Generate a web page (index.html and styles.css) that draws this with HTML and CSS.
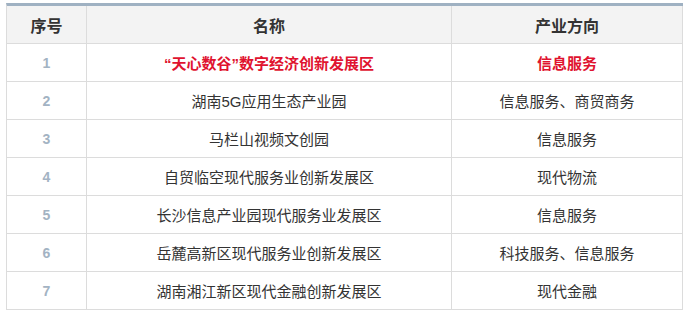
FILE: index.html
```html
<!DOCTYPE html>
<html lang="zh">
<head>
<meta charset="utf-8">
<link rel="stylesheet" href="styles.css">
</head>
<body>
<table class="zone-table">
  <colgroup>
    <col class="c-no">
    <col class="c-name">
    <col class="c-dir">
  </colgroup>
  <thead>
    <tr><th>序号</th><th>名称</th><th>产业方向</th></tr>
  </thead>
  <tbody>
    <tr class="hl"><td class="no">1</td><td>“天心数谷”数字经济创新发展区</td><td>信息服务</td></tr>
    <tr><td class="no">2</td><td>湖南5G应用生态产业园</td><td>信息服务、商贸商务</td></tr>
    <tr><td class="no">3</td><td>马栏山视频文创园</td><td>信息服务</td></tr>
    <tr><td class="no">4</td><td>自贸临空现代服务业创新发展区</td><td>现代物流</td></tr>
    <tr><td class="no">5</td><td>长沙信息产业园现代服务业发展区</td><td>信息服务</td></tr>
    <tr><td class="no">6</td><td>岳麓高新区现代服务业创新发展区</td><td>科技服务、信息服务</td></tr>
    <tr><td class="no">7</td><td>湖南湘江新区现代金融创新发展区</td><td>现代金融</td></tr>
  </tbody>
</table>
</body>
</html>
```
FILE: styles.css
```css
html, body {
  margin: 0;
  padding: 0;
  background: #fff;
}
body {
  padding: 3px 0 0 6px;
  font-family: "Liberation Sans", "Noto Sans CJK SC", sans-serif;
  color: #333;
}
.zone-table {
  width: 677px;
  border-collapse: separate;
  border-spacing: 0;
  table-layout: fixed;
  border-top: 3px solid #9fb1c2;
  border-left: 1px solid #dcdcdc;
}
.c-no { width: 80px; }
.c-name { width: 365px; }
.c-dir { width: 231px; }
.zone-table th,
.zone-table td {
  border-right: 1px solid #dcdcdc;
  border-bottom: 1px solid #dcdcdc;
  text-align: center;
  vertical-align: middle;
  padding: 0;
}
.zone-table th {
  height: 37px;
  background: #f3f3f3;
  font-size: 16px;
  font-weight: bold;
  color: #333;
}
.zone-table td {
  height: 37px;
  font-size: 15px;
  color: #333;
}
.zone-table td.no {
  font-size: 14px;
  font-weight: bold;
  color: #a3b3c3;
}
.zone-table tr.hl td {
  color: #e0132f;
  font-weight: bold;
}
.zone-table tr.hl td.no {
  color: #a3b3c3;
}
```
